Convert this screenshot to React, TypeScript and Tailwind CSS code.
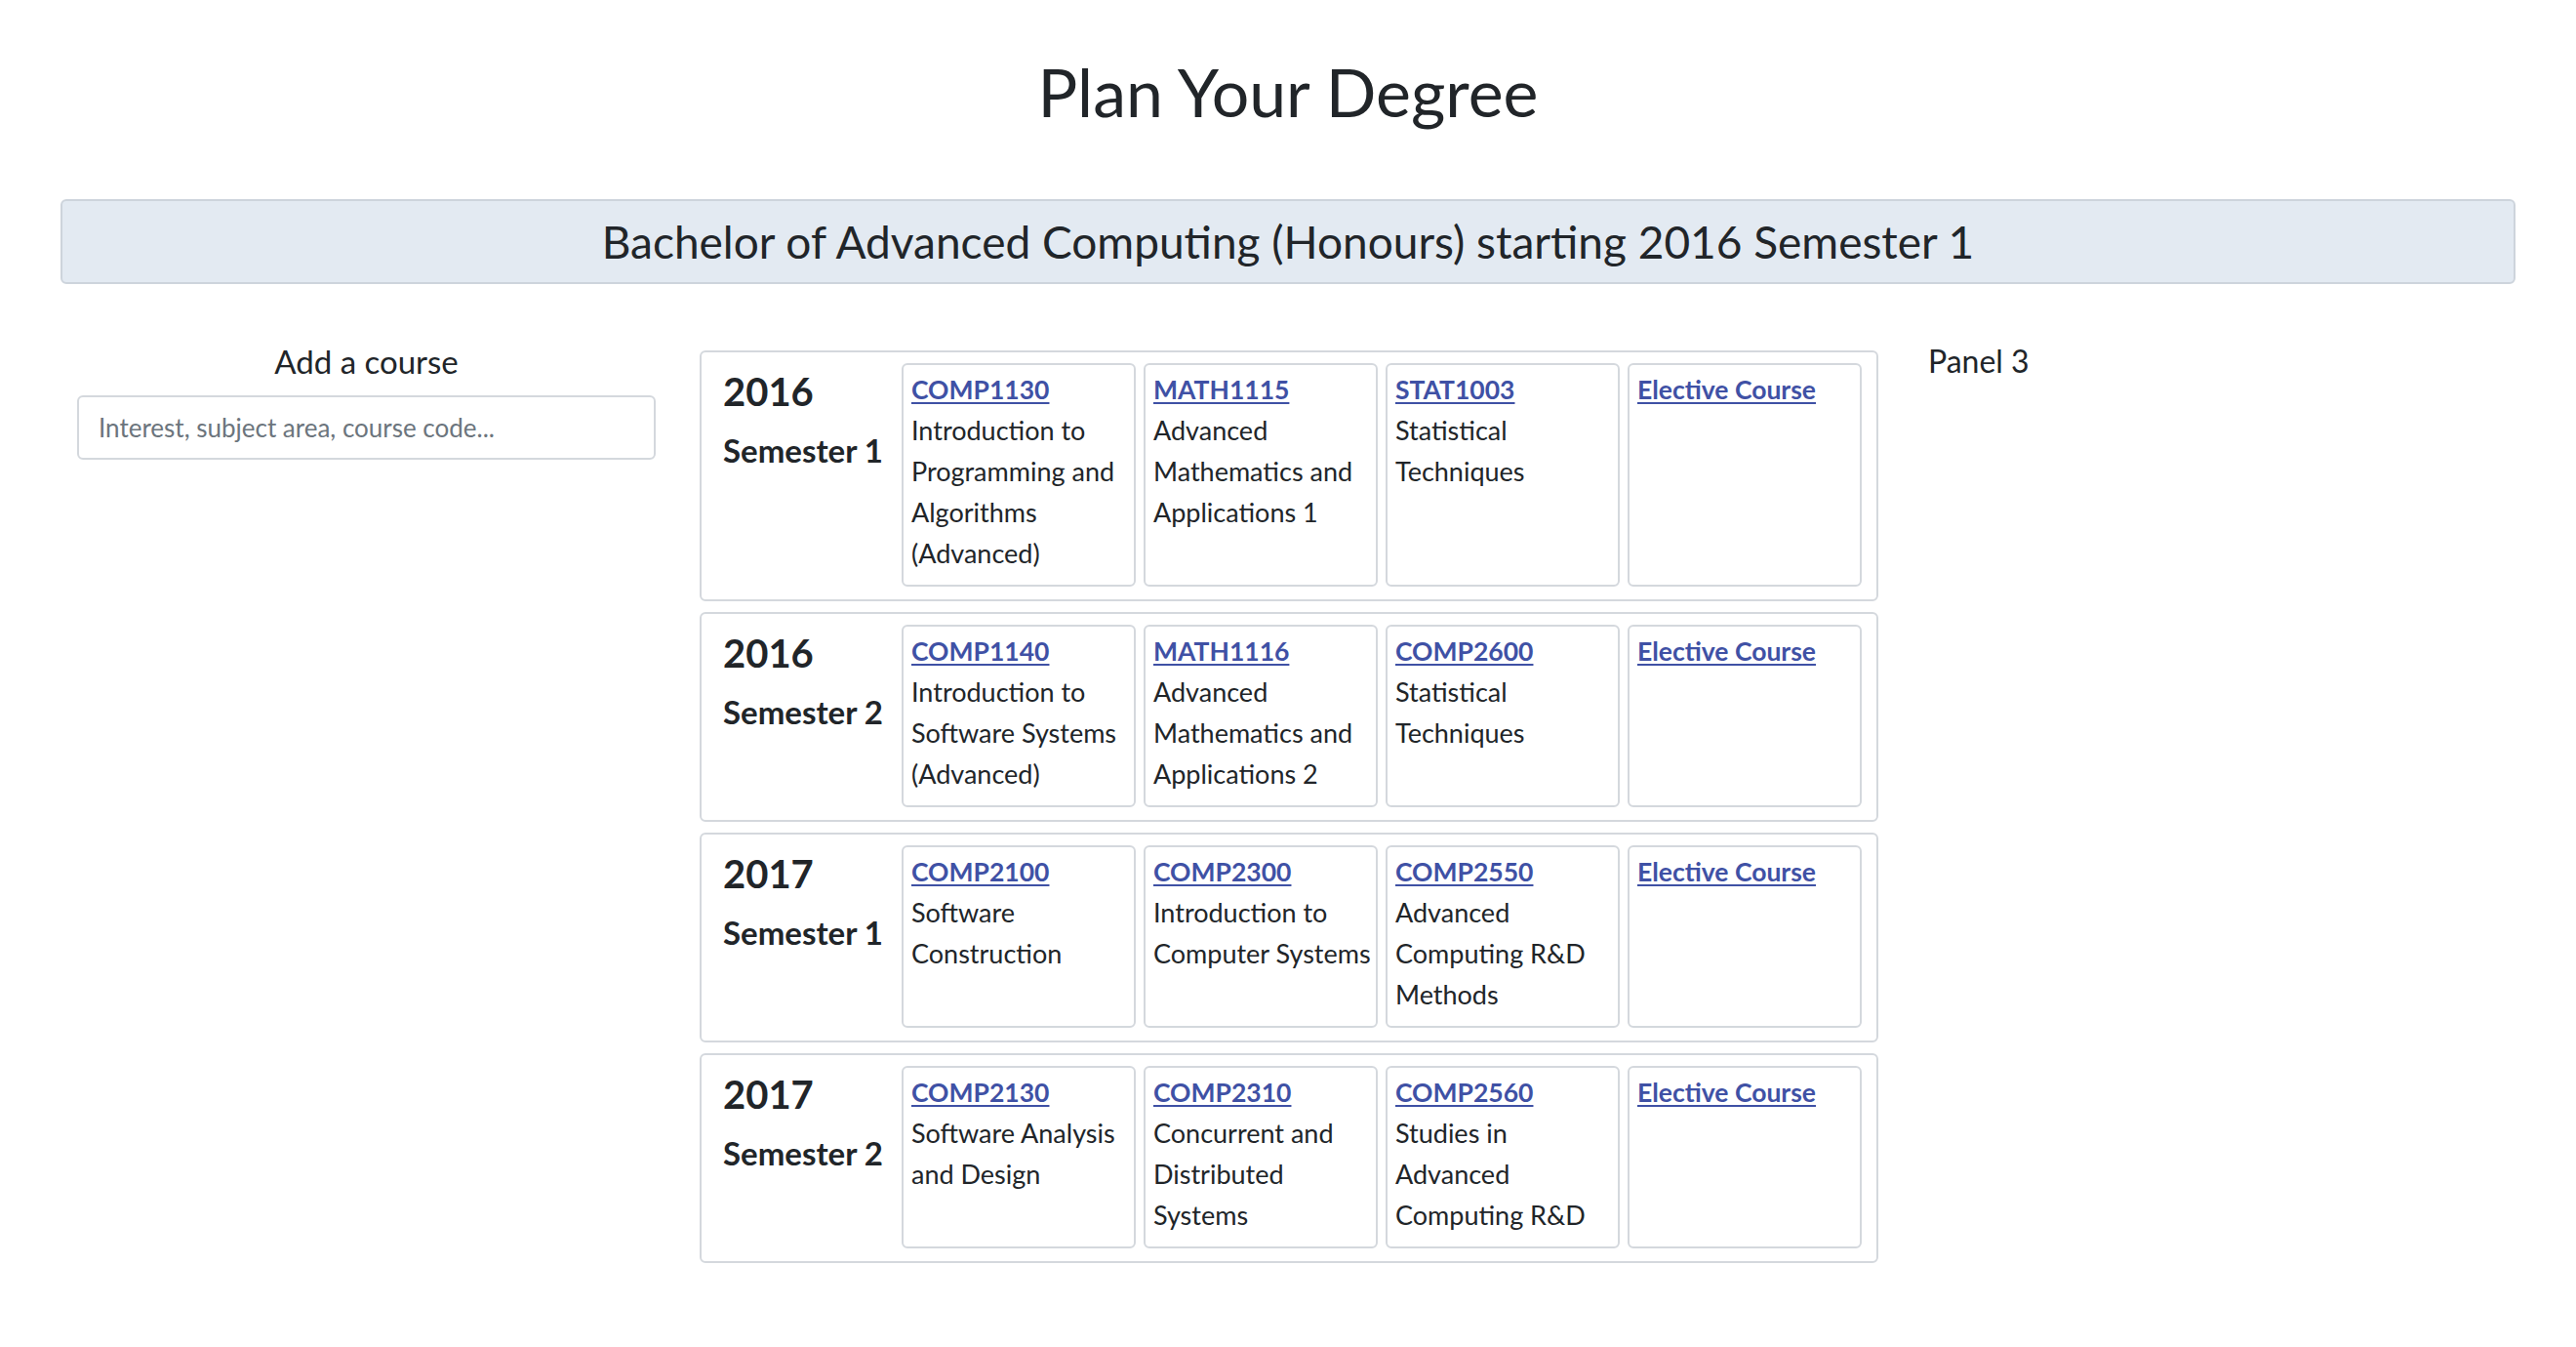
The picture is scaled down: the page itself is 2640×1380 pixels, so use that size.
import { useState } from "react"

type Course = { code: string; name?: string }
type Term = { year: string; semester: string; courses: Course[] }

const PLAN: Term[] = [
  {
    year: "2016",
    semester: "Semester 1",
    courses: [
      { code: "COMP1130", name: "Introduction to Programming and Algorithms (Advanced)" },
      { code: "MATH1115", name: "Advanced Mathematics and Applications 1" },
      { code: "STAT1003", name: "Statistical Techniques" },
      { code: "Elective Course" },
    ],
  },
  {
    year: "2016",
    semester: "Semester 2",
    courses: [
      { code: "COMP1140", name: "Introduction to Software Systems (Advanced)" },
      { code: "MATH1116", name: "Advanced Mathematics and Applications 2" },
      { code: "COMP2600", name: "Statistical Techniques" },
      { code: "Elective Course" },
    ],
  },
  {
    year: "2017",
    semester: "Semester 1",
    courses: [
      { code: "COMP2100", name: "Software Construction" },
      { code: "COMP2300", name: "Introduction to Computer Systems" },
      { code: "COMP2550", name: "Advanced Computing R&D Methods" },
      { code: "Elective Course" },
    ],
  },
  {
    year: "2017",
    semester: "Semester 2",
    courses: [
      { code: "COMP2130", name: "Software Analysis and Design" },
      { code: "COMP2310", name: "Concurrent and Distributed Systems" },
      { code: "COMP2560", name: "Studies in Advanced Computing R&D" },
      { code: "Elective Course" },
    ],
  },
]

const HEAD = "font-['Lato','Open_Sans',sans-serif]"
const BODY = "font-['Lato','Noto_Sans',sans-serif]"

function CourseCard({ course }: { course: Course }) {
  return (
    <div className="w-[240px] border-2 border-[#d4d8dd] rounded-md pl-[8px] pr-[2px] pt-[4px] pb-[11px]">
      <a href="#" className="block text-[26.5px] leading-[42px] font-bold text-[#3f51a5] underline decoration-2 underline-offset-[3px]">
        {course.code}
      </a>
      {course.name && <p className="text-[27px] leading-[42px] text-[#212529]">{course.name}</p>}
    </div>
  )
}

function TermRow({ term }: { term: Term }) {
  return (
    <div className="flex border-2 border-[#d4d8dd] rounded-md pt-[11px] pb-[13px] pr-[13px]">
      <div className="w-[205px] shrink-0 pl-[22px] pt-[5px] text-[#212529]">
        <div className="text-[40px] leading-[48px] font-bold">{term.year}</div>
        <div className="mt-[16px] text-[33px] leading-[40px] font-bold whitespace-nowrap">{term.semester}</div>
      </div>
      <div className="flex gap-[8px]">
        {term.courses.map((c, i) => (
          <CourseCard key={i} course={c} />
        ))}
      </div>
    </div>
  )
}

export default function App() {
  const [query, setQuery] = useState("")

  return (
    <div className={`min-h-screen bg-white text-[#212529] ${BODY}`}>
      <h1 className={`${HEAD} text-center text-[68px] leading-[84px] pt-[52px]`}>Plan Your Degree</h1>

      <div className="mx-[62px] mt-[68px]">
        <div className={`${HEAD} h-[87px] flex items-center justify-center bg-[#e3eaf2] border-2 border-[#cdd4dc] rounded-md text-[46px]`}>
          Bachelor of Advanced Computing (Honours) starting 2016 Semester 1
        </div>

        <div className="flex mt-[68px]">
          {/* Left panel */}
          <div className="w-[627px] shrink-0 px-[17px]">
            <h2 className={`${HEAD} text-center text-[33px] leading-[40px] mt-[-9px]`}>Add a course</h2>
            <input
              type="text"
              value={query}
              onChange={(e) => setQuery(e.target.value)}
              placeholder="Interest, subject area, course code..."
              className={`${HEAD} mt-[15px] w-full h-[66px] border-2 border-[#d4d8dd] rounded-md px-[20px] text-[26px] placeholder:text-[#6c757d] outline-none`}
            />
          </div>

          {/* Degree plan */}
          <div className="w-[1261px] shrink-0 pl-[28px] pr-[25px] flex flex-col gap-[11px]">
            {PLAN.map((t, i) => (
              <TermRow key={i} term={t} />
            ))}
          </div>

          {/* Panel 3 */}
          <div className="flex-1 pl-[26px]">
            <h2 className={`${HEAD} text-[32px] leading-[40px] mt-[-9px]`}>Panel 3</h2>
          </div>
        </div>
      </div>
    </div>
  )
}
